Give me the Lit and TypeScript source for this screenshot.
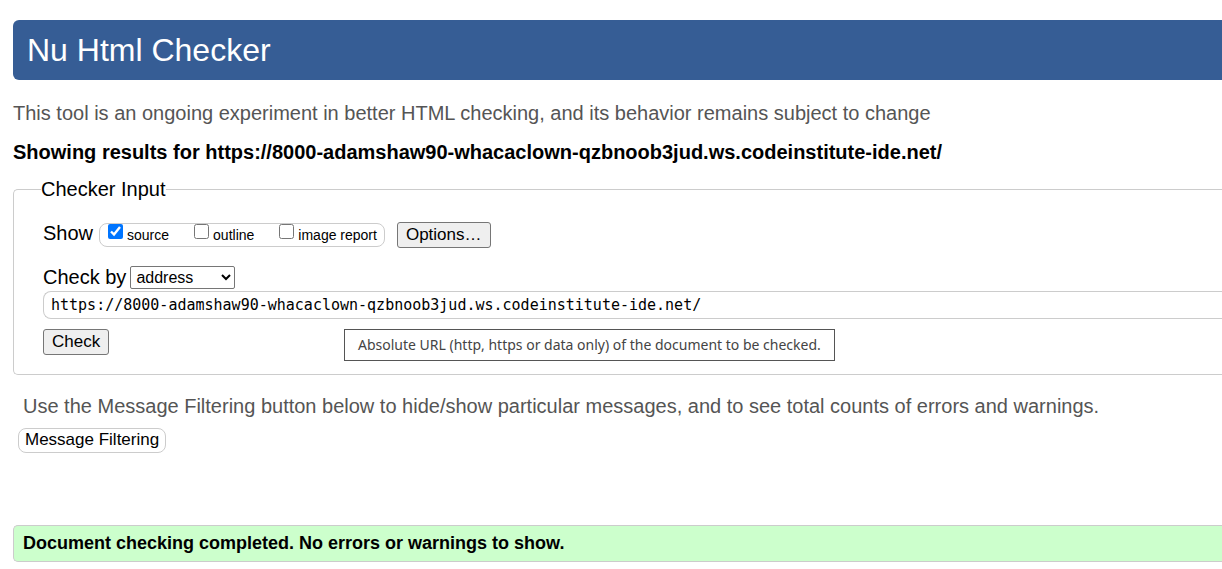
import { LitElement, html, css } from "lit";
import { customElement, state } from "lit/decorators.js";

const DOCUMENT_URL = "https://8000-adamshaw90-whacaclown-qzbnoob3jud.ws.codeinstitute-ide.net/";

@customElement("app-root")
export class AppRoot extends LitElement {
  @state() private showOptions = [
    { id: "source", label: "source", checked: true },
    { id: "outline", label: "outline", checked: false },
    { id: "imagereport", label: "image report", checked: false },
  ];

  static styles = css`
    :host {
      display: block;
      padding: 20px 0 8px 13px;
      background: #fff;
      color: #000;
      font: 20px/24px "Liberation Sans", Arial, sans-serif;
    }
    h1, h2, p { margin: 0; }
    .banner {
      padding: 12px 14px;
      border-radius: 6px 0 0 6px;
      background: #365d95;
      color: #fff;
      font-size: 32px;
      font-weight: 400;
      line-height: 36px;
    }
    .intro { margin-top: 21px; color: #555; }
    .results { margin-top: 15px; font-size: 20px; }
    .panel {
      margin: 13px 0 0;
      padding: 21px 0 19px 27px;
      border: 1px solid #ccc;
      border-right: 0;
      border-radius: 5px 0 0 5px;
      min-width: 0;
    }
    .legend { padding: 0; }
    .fields { display: flex; flex-direction: column; padding-left: 2px; }
    .show, .by { display: flex; align-items: flex-start; line-height: 22px; }
    .group {
      display: flex;
      box-sizing: border-box;
      height: 24px;
      margin: 1px 12px 0 6px;
      padding: 0 7px 0 8px;
      gap: 25px;
      border: 1px solid #ccc;
      border-radius: 8px;
    }
    .option { display: flex; gap: 4px; font-size: 14px; line-height: 22px; }
    .tick { width: 15px; height: 15px; margin: 0; }
    .button {
      box-sizing: border-box;
      height: 26px;
      padding: 0 8px;
      border: 1px solid #767676;
      border-radius: 3px;
      background: #efefef;
      color: #000;
      font: 17px/22px "Liberation Sans", Arial, sans-serif;
    }
    .by { gap: 4px; margin-top: 18px; }
    .select {
      width: 105px;
      height: 23px;
      margin: 0;
      padding: 0 1px;
      border: 1px solid #767676;
      border-radius: 2px;
      background: #fff;
      color: #000;
      font: 16px "Liberation Sans", Arial, sans-serif;
    }
    .address { position: relative; display: flex; margin-top: 2px; }
    .url {
      flex: 1;
      min-width: 0;
      box-sizing: border-box;
      height: 28px;
      padding: 0 7px;
      border: 1px solid #ccc;
      border-right: 0;
      border-radius: 8px 0 0 8px;
      background: #fff;
      color: #000;
      font: 15px "DejaVu Sans Mono", monospace;
      outline: none;
    }
    .tooltip {
      position: absolute;
      top: 38px;
      left: 301px;
      padding: 4px 13px;
      border: 1px solid #555;
      background: #fff;
      color: #444;
      font: 14px/22px "Noto Sans", "Open Sans", sans-serif;
      white-space: nowrap;
    }
    .check { align-self: flex-start; margin-top: 10px; }
    .hint { margin-top: 19px; padding-left: 10px; color: #555; }
    .filter {
      display: block;
      height: 25px;
      margin: 10px 0 0 5px;
      padding: 0 6px 2px;
      border-color: #ccc;
      border-radius: 8px;
      background: #fff;
    }
    .success {
      margin-top: 72px;
      padding: 5px 9px 6px;
      border: 1px solid #ccc;
      border-right: 0;
      border-radius: 5px 0 0 5px;
      background: #cfc;
      font-size: 18px;
      font-weight: 700;
    }
  `;

  private toggle(id: string, checked: boolean) {
    this.showOptions = this.showOptions.map((o) => (o.id === id ? { ...o, checked } : o));
  }

  render() {
    return html`
      <header><h1 class="banner">Nu Html Checker</h1></header>
      <main>
        <p class="intro">This tool is an ongoing experiment in better HTML checking, and its behavior remains subject to change</p>
        <h2 class="results">Showing results for ${DOCUMENT_URL}</h2>
        <fieldset class="panel">
          <legend class="legend">Checker Input</legend>
          <div class="fields">
            <div class="show">
              <span id="show-label">Show</span>
              <div class="group" role="group" aria-labelledby="show-label">
                ${this.showOptions.map((o) => html`
                  <label class="option" for=${o.id}>
                    <input class="tick" type="checkbox" id=${o.id} .checked=${o.checked}
                      @change=${(e: Event) => this.toggle(o.id, (e.target as HTMLInputElement).checked)}>
                    <span>${o.label}</span>
                  </label>`)}
              </div>
              <button class="button" type="button">Options…</button>
            </div>
            <div class="by">
              <label for="method">Check by</label>
              <select class="select" id="method">
                <option>address</option>
                <option>file upload</option>
                <option>text input</option>
              </select>
            </div>
            <div class="address">
              <input class="url" type="url" aria-label="Document address" aria-describedby="url-tip" .value=${DOCUMENT_URL}>
              <div class="tooltip" id="url-tip" role="tooltip">Absolute URL (http, https or data only) of the document to be checked.</div>
            </div>
            <button class="button check" type="submit">Check</button>
          </div>
        </fieldset>
        <p class="hint">Use the Message Filtering button below to hide/show particular messages, and to see total counts of errors and warnings.</p>
        <button class="button filter" type="button">Message Filtering</button>
        <p class="success" role="status">Document checking completed. No errors or warnings to show.</p>
      </main>
    `;
  }
}
